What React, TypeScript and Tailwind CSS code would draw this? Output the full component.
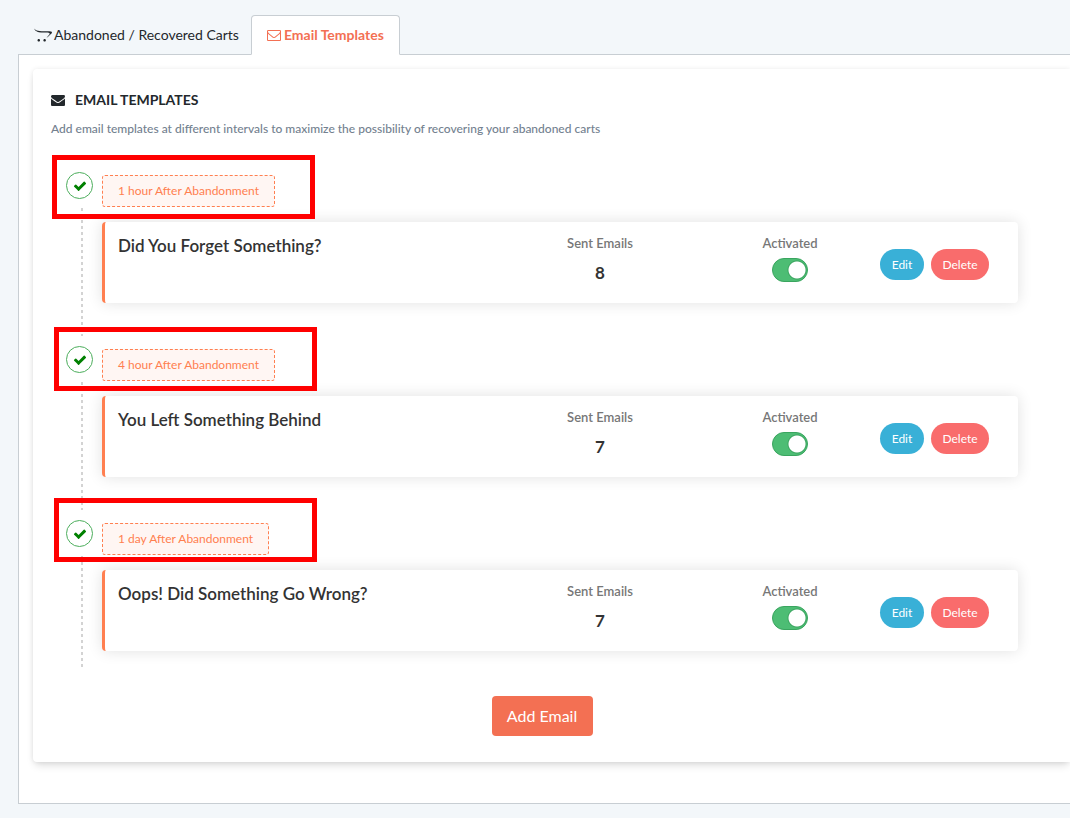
import { useState } from "react";
import { FaOpencart } from "react-icons/fa";

const envelopeOutline =
  "M1664 1504v-768q-32 36-69 66-268 206-426 338-51 43-83 67t-86.5 48.5-102.5 24.5h-2q-48 0-102.5-24.5t-86.5-48.5-83-67q-158-132-426-338-37-30-69-66v768q0 13 9.5 22.5t22.5 9.5h1472q13 0 22.5-9.5t9.5-22.5zm0-1051v-24.5l-.5-13-3-12.5-5.5-9-9-7.5-14-2.5h-1472q-13 0-22.5 9.5t-9.5 22.5q0 168 147 284 193 152 401 317 6 5 35 29.5t46 37.5 44.5 31.5 50.5 27.5 43 9h2q20 0 43-9t50.5-27.5 44.5-31.5 46-37.5 35-29.5q208-165 401-317 54-43 100.5-115.5t46.5-131.5zm128-37v1088q0 66-47 113t-113 47h-1472q-66 0-113-47t-47-113v-1088q0-66 47-113t113-47h1472q66 0 113 47t47 113z";
const envelopeSolid =
  "M1792 710v794q0 66-47 113t-113 47h-1472q-66 0-113-47t-47-113v-794q44 49 101 87 362 246 497 345 57 42 92.5 65.5t94.5 48 110 24.5h2q51 0 110-24.5t94.5-48 92.5-65.5q170-123 498-345 57-39 100-87zm0-294q0 79-49 151t-122 123q-376 261-468 325-10 7-42.5 31t-54 38.5-52 32.5-57.5 27-50 9h-2q-23 0-50-9t-57.5-27-52-32.5-54-38.5-42.5-31q-91-64-262-182.5t-205-142.5q-62-42-117-115.5t-55-136.5q0-78 41.5-130t118.5-52h1472q65 0 112.5 47t47.5 113z";
const checkMark =
  "M1671 566q0 40-28 68l-724 724-136 136q-28 28-68 28t-68-28l-136-136-362-362q-28-28-28-68t28-68l136-136q28-28 68-28t68 28l294 295 656-657q28-28 68-28t68 28l136 136q28 28 28 68z";

function Icon({ path, className }: { path: string; className: string }) {
  return (
    <svg viewBox="0 0 1792 1792" fill="currentColor" aria-hidden="true" className={className}>
      <path d={path} />
    </svg>
  );
}

type Template = {
  delay: string;
  title: string;
  sent: number;
  highlight: string;
  line: string;
};

const templates: Template[] = [
  {
    delay: "1 hour After Abandonment",
    title: "Did You Forget Something?",
    sent: 8,
    highlight: "-top-[7px] left-px",
    line: "h-[128px]",
  },
  {
    delay: "4 hour After Abandonment",
    title: "You Left Something Behind",
    sent: 7,
    highlight: "-top-[9px] left-[3px]",
    line: "h-[128px]",
  },
  {
    delay: "1 day After Abandonment",
    title: "Oops! Did Something Go Wrong?",
    sent: 7,
    highlight: "-top-[12px] left-[3px]",
    line: "h-[114px]",
  },
];

function TemplateRow({ template }: { template: Template }) {
  const [active, setActive] = useState(true);
  return (
    <li className="relative flex">
      <div className="flex w-[51px] shrink-0 flex-col pt-[10px] pl-[15px]">
        <span className="flex size-[27px] items-center justify-center rounded-full border border-[#4cae5c] text-[#008000]">
          <Icon path={checkMark} className="size-[14px]" />
        </span>
        <span
          className={`mt-[9px] ml-[15px] w-[2px] bg-[repeating-linear-gradient(to_bottom,#d3d3d3_0px,#d3d3d3_3px,transparent_3px,transparent_6px)] ${template.line}`}
        />
      </div>
      <div className="min-w-0 flex-1 pt-[13px]">
        <span className="inline-flex h-8 items-center rounded-[3px] border border-dashed border-[#ff7f50] bg-[#fff6f3] px-[15px] align-top text-xs text-[#ff7f50]">
          {template.delay}
        </span>
        <article className="mt-[15px] flex h-[81px] rounded-[4px] border-l-[3px] border-[#ff7f50] bg-white pr-[29px] pl-[13px] shadow-[0_0_15px_rgba(0,0,0,0.12)]">
          <h3 className="min-w-0 flex-1 pt-3 text-[17px] leading-6 font-semibold text-[#333]">{template.title}</h3>
          <div className="flex w-[200px] flex-col items-center pt-[11px] text-[#777]">
            <span className="text-[13px] leading-5 font-semibold">Sent Emails</span>
            <span className="mt-2 text-[17px] leading-6 font-bold text-[#333]">{template.sent}</span>
          </div>
          <label className="flex w-[180px] flex-col items-center pt-[11px] text-[#777]">
            <span className="text-[13px] leading-5 font-semibold">Activated</span>
            <input
              type="checkbox"
              role="switch"
              checked={active}
              onChange={() => setActive(!active)}
              className="mt-[5px] h-6 w-9 appearance-none rounded-full border border-[#3aa55f] bg-[#bbb] bg-[radial-gradient(circle_at_11px_11px,white_8px,transparent_9px)] checked:bg-[#4dbd74] checked:bg-[radial-gradient(circle_at_24px_11px,white_8px,#3aa55f_9px,transparent_10px)]"
            />
          </label>
          <div className="flex items-start gap-[7px] pt-[27px] text-xs text-white">
            <button type="button" className="h-[31px] w-11 rounded-full bg-[#39b0d7]">
              Edit
            </button>
            <button type="button" className="h-[31px] w-[58px] rounded-full bg-[#f96c6c]">
              Delete
            </button>
          </div>
        </article>
      </div>
      <span className={`pointer-events-none absolute h-16 w-[263px] border-5 border-[#ff0000] ${template.highlight}`} />
    </li>
  );
}

export default function App() {
  return (
    <div className="min-h-screen overflow-hidden bg-[#f3f7fa] pt-[15px] pb-[14px] pl-[18px] font-['Lato','Noto_Sans',sans-serif] text-[#23282c]">
      <nav className="relative z-10 -mb-px flex h-10 text-sm">
        <a href="#carts" className="flex items-center gap-[2px] pr-3 pl-4">
          <FaOpencart className="size-[18px]" />
          Abandoned / Recovered Carts
        </a>
        <a
          href="#templates"
          aria-current="page"
          className="flex items-center gap-[3px] rounded-t-[4px] border border-[#c8ced3] border-b-white bg-white px-[15px] font-bold text-[#f37053]"
        >
          <Icon path={envelopeOutline} className="size-[14px]" />
          Email Templates
        </a>
      </nav>
      <main className="border border-r-0 border-[#c8ced3] bg-white pt-[14px] pb-[41px] pl-[14px]">
        <section className="rounded-l-[4px] bg-white pt-[18px] pb-[26px] pl-[18px] shadow-[0_0_5px_rgba(0,0,0,0.08),0_5px_8px_-2px_rgba(0,0,0,0.14)]">
          <h2 className="flex h-[26px] items-center gap-[10px] text-sm font-bold">
            <Icon path={envelopeSolid} className="size-[14px]" />
            EMAIL TEMPLATES
          </h2>
          <p className="mt-[7px] h-[18px] text-xs leading-[18px] font-medium text-[#73818f]">
            Add email templates at different intervals to maximize the possibility of recovering your abandoned carts
          </p>
          <ul className="mt-6 mr-[52px]">
            {templates.map((template) => (
              <TemplateRow key={template.delay} template={template} />
            ))}
          </ul>
          <div className="mt-[26px] mr-[37px] flex justify-center">
            <button type="button" className="h-10 w-[101px] rounded-[4px] bg-[#f37053] text-base text-white">
              Add Email
            </button>
          </div>
        </section>
      </main>
    </div>
  );
}
